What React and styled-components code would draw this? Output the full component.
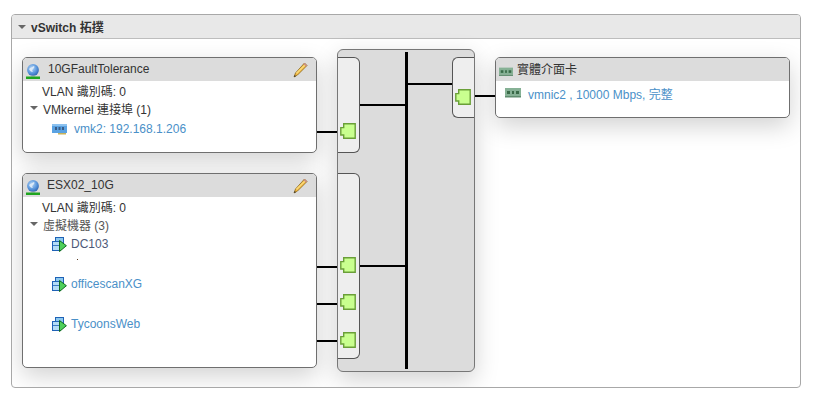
import React from "react";
import styled, { createGlobalStyle } from "styled-components";

const Global = createGlobalStyle`
  html, body { margin: 0; background: #fff; }
  body {
    font-family: "Liberation Sans", "Noto Sans CJK TC", sans-serif;
    font-size: 12px;
    color: #333;
  }
`;

const Panel = styled.section`
  box-sizing: border-box;
  width: 790px;
  height: 374px;
  margin: 14px 0 0 11px;
  border: 1px solid #a8a8a8;
  border-radius: 4px;
  overflow: hidden;
`;
const PanelHeader = styled.header`
  display: flex;
  align-items: center;
  gap: 5px;
  height: 23px;
  padding-left: 6px;
  background: #e8e8e8;
  border-bottom: 1px solid #bdbdbd;
  font-weight: bold;
  color: #333;
`;
const Caret = styled.span`
  width: 0;
  height: 0;
  flex: none;
  border-left: 4px solid transparent;
  border-right: 4px solid transparent;
  border-top: 4px solid #666;
`;
const Canvas = styled.div`
  position: relative;
  display: flex;
  align-items: flex-start;
  height: 348px;
  padding: 18px 0 0 10px;
  box-sizing: border-box;
`;
const Column = styled.div`
  display: flex;
  flex-direction: column;
  gap: 20px;
  width: 295px;
`;
const Card = styled.div`
  box-sizing: border-box;
  height: ${(p) => p.$height}px;
  width: 295px;
  flex: none;
  background: #fff;
  border: 1px solid #6f6f6f;
  border-radius: 5px;
  overflow: hidden;
  box-shadow: 0 8px 24px rgba(0, 0, 0, 0.18);
`;
const CardHead = styled.div`
  display: flex;
  align-items: center;
  height: 23px;
  padding: 0 8px 0 3px;
  background: #dcdcdc;
`;
const CardTitle = styled.span`
  margin: -2px 0 0 ${(p) => p.$left}px;
  flex: 1;
  color: #333;
`;
const IconSlot = styled.span`
  display: flex;
  margin-top: ${(p) => p.$top}px;
`;
const Row = styled.div`
  display: flex;
  align-items: center;
  height: 18px;
  padding-left: 19px;
  color: #333;
`;
const GroupRow = styled(Row)`
  padding-left: 7px;
  gap: 5px;
  color: ${(p) => (p.$muted ? "#555" : "#333")};
`;
const ItemRow = styled.div`
  display: flex;
  align-items: center;
  gap: ${(p) => p.$gap}px;
  height: 18px;
  margin-top: ${(p) => p.$top || 0}px;
  padding-left: ${(p) => p.$left || 29}px;
  color: ${(p) => (p.$dark ? "#4d5a78" : "#4a90c8")};
`;
const VmSlot = styled.div`
  box-sizing: border-box;
  height: 40px;
  padding-top: 2px;
  position: relative;
`;
const Speck = styled.i`
  position: absolute;
  left: 54px;
  top: 26px;
  width: 1px;
  height: 1px;
  background: #5a3a20;
`;
const Switch = styled.div`
  position: relative;
  box-sizing: border-box;
  display: flex;
  justify-content: space-between;
  align-items: flex-start;
  flex: none;
  width: 138px;
  height: 323px;
  margin: -8px 0 0 20px;
  padding-top: 7px;
  background: #dcdcdc;
  border: 1px solid #777;
  border-radius: 6px;
  box-shadow: 0 8px 24px rgba(0, 0, 0, 0.18);
`;
const PortStack = styled.div`
  display: flex;
  flex-direction: column;
  gap: 20px;
`;
const PortBox = styled.div`
  position: relative;
  box-sizing: border-box;
  width: 22px;
  height: ${(p) => p.$height}px;
  background: #eeeeee;
  border: 1px solid #555;
  border-${(p) => p.$side}: none;
  border-radius: ${(p) => (p.$side === "left" ? "0 6px 6px 0" : "6px 0 0 6px")};
`;
const PortSpot = styled.div`
  position: absolute;
  left: 2px;
  top: ${(p) => p.$top}px;
  width: 16px;
  height: 16px;
`;
const Wire = styled.div`
  position: absolute;
  left: ${(p) => p.$x - 12}px;
  top: ${(p) => p.$y - 39}px;
  width: ${(p) => p.$w}px;
  height: ${(p) => p.$h}px;
  background: #000;
`;
const RightCard = styled(Card)`
  margin-left: 20px;
`;

const Port = () => (
  <svg width="16" height="16" viewBox="0 0 16 16">
    <path d="M3.7.7H15.2V15.2H3.7V12H.8V4.6H3.7Z" fill="#c9ff8f" stroke="#6a9f38" strokeWidth="1.4" />
  </svg>
);

const Globe = ({ id }) => (
  <svg width="14" height="15" viewBox="0 0 14 15">
    <defs>
      <radialGradient id={id} cx="0.4" cy="0.35" r="0.7">
        <stop offset="0" stopColor="#b5d6f5" />
        <stop offset="0.6" stopColor="#5a96dc" />
        <stop offset="1" stopColor="#2c62ae" />
      </radialGradient>
    </defs>
    <circle cx="7" cy="6" r="5.9" fill={`url(#${id})`} />
    <path d="M3 5c2-2 4-2 5-3 1 1 0 2-1 3s-1 2 0 3c-2 0-3-1-4-3Z" fill="#dbe9f8" />
    <rect x="5" y="11.5" width="4" height="1" fill="#9aa7b5" />
    <rect x="0" y="12.5" width="14" height="2.5" fill="#1fa51f" />
  </svg>
);

const Pencil = () => (
  <svg width="15" height="16" viewBox="0 0 15 16">
    <path d="M11.5 1 14 3.5 4.5 13 1 15l1.5-4Z" fill="#f3b53b" stroke="#8a6a20" strokeWidth="0.8" />
    <path d="M3 10.7 12 2l1 1-9 9Z" fill="#f9d97a" />
    <path d="M11.5 1 14 3.5 13 4.6 10.4 2Z" fill="#c98a8a" />
    <path d="M1 15l.7-2 1.3 1.3Z" fill="#333" />
  </svg>
);

const VmkIcon = () => (
  <svg width="15" height="11" viewBox="0 0 15 11">
    <rect x="0" y="0" width="15" height="9" fill="#5aa2e2" />
    <rect x="0" y="0" width="15" height="2" fill="#8cc2f0" />
    <rect x="3" y="3" width="2" height="3" fill="#3a5c86" />
    <rect x="6.5" y="3" width="2" height="3" fill="#3a5c86" />
    <rect x="10" y="3" width="2" height="3" fill="#3a5c86" />
    <rect x="6" y="9" width="8" height="1.5" fill="#c9b35a" />
  </svg>
);

const VmIcon = () => (
  <svg width="15" height="15" viewBox="0 0 15 15">
    <rect x="3.5" y="0.5" width="8" height="8" fill="#8cc8ee" stroke="#1f62b6" />
    <rect x="0.5" y="4.5" width="8" height="9" fill="#b4dcf5" stroke="#1f62b6" />
    <path d="M0.5 8.5h7" stroke="#1f62b6" strokeWidth="0.8" />
    <path d="M7.5 3.5 14.4 8.7 7.5 14.5Z" fill="#4fd05a" stroke="#0d6a1d" />
  </svg>
);

const NicIcon = ({ w }) => (
  <svg width={w} height="10" viewBox="0 0 16 10">
    <rect x="0" y="0" width="16" height="8" fill="#86b195" />
    <rect x="2" y="3" width="3" height="3" fill="#3a6a48" />
    <rect x="7" y="3" width="2" height="3" fill="#3a6a48" />
    <rect x="11" y="3" width="3" height="3" fill="#3a6a48" />
    <rect x="0" y="8" width="16" height="1.5" fill="#5f8c6e" />
  </svg>
);

const vms = [
  { name: "DC103", dark: true, speck: true },
  { name: "officescanXG" },
  { name: "TycoonsWeb" },
];

const wires = [
  [405, 52, 3, 317],
  [360, 104, 46, 2],
  [408, 83, 44, 2],
  [360, 265, 46, 2],
  [317, 131, 20, 2],
  [317, 266, 20, 2],
  [317, 303, 20, 2],
  [317, 340, 20, 2],
  [475, 95, 20, 2],
];

export default function App() {
  return (
    <>
      <Global />
      <Panel>
        <PanelHeader>
          <Caret />
          vSwitch 拓撲
        </PanelHeader>
        <Canvas>
          <Column>
            <Card $height={96}>
              <CardHead>
                <IconSlot $top={3}>
                  <Globe id="globe-a" />
                </IconSlot>
                <CardTitle $left={8}>10GFaultTolerance</CardTitle>
                <Pencil />
              </CardHead>
              <Row>VLAN 識別碼: 0</Row>
              <GroupRow>
                <Caret />
                VMkernel 連接埠 (1)
              </GroupRow>
              <ItemRow $top={3} $gap={7}>
                <VmkIcon />
                vmk2: 192.168.1.206
              </ItemRow>
            </Card>
            <Card $height={195}>
              <CardHead>
                <IconSlot $top={3}>
                  <Globe id="globe-b" />
                </IconSlot>
                <CardTitle $left={7}>ESX02_10G</CardTitle>
                <Pencil />
              </CardHead>
              <Row>VLAN 識別碼: 0</Row>
              <GroupRow $muted>
                <Caret />
                虛擬機器 (3)
              </GroupRow>
              {vms.map((vm) => (
                <VmSlot key={vm.name}>
                  <ItemRow $gap={4} $dark={vm.dark}>
                    <VmIcon />
                    {vm.name}
                  </ItemRow>
                  {vm.speck && <Speck />}
                </VmSlot>
              ))}
            </Card>
          </Column>
          <Switch>
            <PortStack>
              <PortBox $side="left" $height={96}>
                <PortSpot $top={65}>
                  <Port />
                </PortSpot>
              </PortBox>
              <PortBox $side="left" $height={186}>
                <PortSpot $top={83}>
                  <Port />
                </PortSpot>
                <PortSpot $top={120}>
                  <Port />
                </PortSpot>
                <PortSpot $top={158}>
                  <Port />
                </PortSpot>
              </PortBox>
            </PortStack>
            <PortBox $side="right" $height={61}>
              <PortSpot $top={31}>
                <Port />
              </PortSpot>
            </PortBox>
          </Switch>
          <RightCard $height={61}>
            <CardHead>
              <IconSlot $top={4}>
                <NicIcon w={14} />
              </IconSlot>
              <CardTitle $left={4}>實體介面卡</CardTitle>
            </CardHead>
            <ItemRow $left={9} $gap={7} $top={3}>
              <NicIcon w={16} />
              vmnic2 , 10000 Mbps, 完整
            </ItemRow>
          </RightCard>
          {wires.map(([x, y, w, h]) => (
            <Wire key={`${x}-${y}`} $x={x} $y={y} $w={w} $h={h} />
          ))}
        </Canvas>
      </Panel>
    </>
  );
}
